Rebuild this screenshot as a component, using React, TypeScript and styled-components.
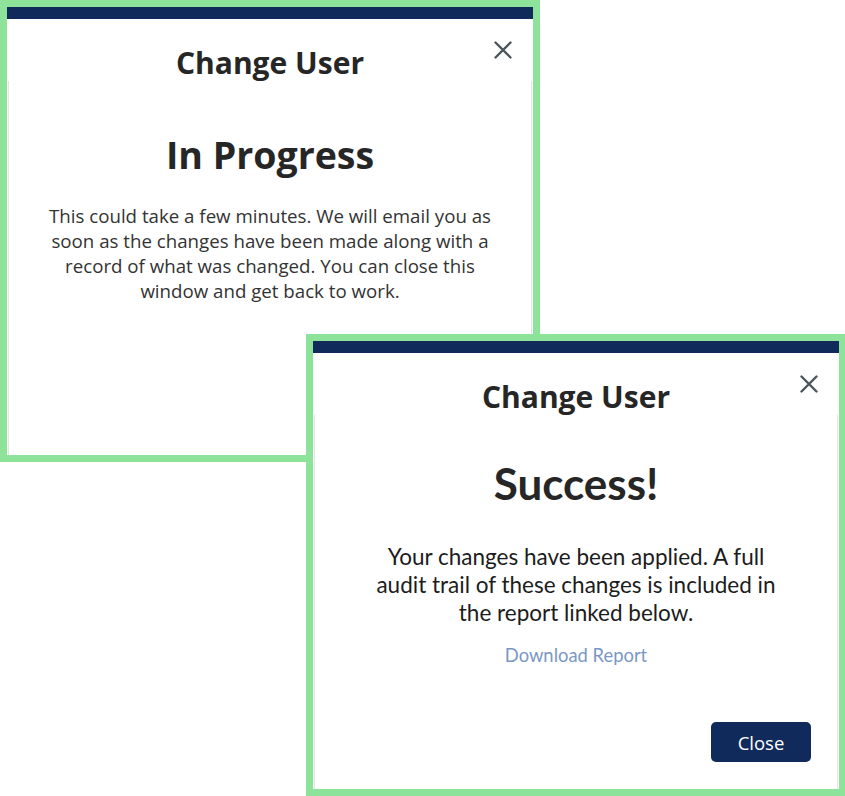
import React from "react";
import styled, { createGlobalStyle } from "styled-components";

const GlobalStyle = createGlobalStyle`
  html, body { margin: 0; padding: 0; background: #ffffff; }
  body { font-family: "Open Sans", "Liberation Sans", sans-serif; }
`;

const Desk = styled.div`
  position: relative;
  width: 845px;
  height: 796px;
  overflow: hidden;
  background: #ffffff;
`;

const Card = styled.section<{ $x: number; $y: number }>`
  position: absolute;
  left: ${(p) => p.$x}px;
  top: ${(p) => p.$y}px;
  width: 540px;
  height: 462px;
  box-sizing: border-box;
  border: 7px solid #8ee39a;
  background: #ffffff;
  display: flex;
  flex-direction: column;
`;

const TopBar = styled.div`
  height: 12px;
  flex: none;
  background: #0f2a5b;
`;

const Header = styled.header`
  height: 62px;
  flex: none;
  display: grid;
  grid-template-columns: 1fr auto 1fr;
`;

const Title = styled.h2`
  grid-column: 2;
  margin: 25px 0 0;
  font-family: "Open Sans", sans-serif;
  font-weight: 700;
  font-size: 30px;
  line-height: 38px;
  color: #262626;
`;

const CloseX = styled.button`
  grid-column: 3;
  justify-self: end;
  align-self: start;
  margin: 21px 20px 0 0;
  width: 20px;
  height: 20px;
  padding: 0;
  border: none;
  background: none;
  cursor: pointer;
  display: flex;
  align-items: center;
  justify-content: center;
`;

const Body = styled.div<{ $top: number }>`
  flex: 1;
  display: flex;
  flex-direction: column;
  align-items: center;
  text-align: center;
  padding: ${(p) => p.$top}px 0 27px;
  margin: 0 1px;
  border-left: 1px solid #e4e4e4;
  border-right: 1px solid #e4e4e4;
`;

const Heading = styled.h1<{ $alt?: boolean }>`
  margin: 0;
  font-family: ${(p) => (p.$alt ? '"Lato", sans-serif' : '"Open Sans", sans-serif')};
  font-weight: 700;
  font-size: ${(p) => (p.$alt ? 44 : 37.5)}px;
  line-height: ${(p) => (p.$alt ? 56 : 52)}px;
  color: #262626;
`;

const Text = styled.p<{ $alt?: boolean }>`
  margin: ${(p) => (p.$alt ? 32 : 22)}px 0 0;
  max-width: ${(p) => (p.$alt ? 410 : 458)}px;
  font-family: ${(p) => (p.$alt ? '"Lato", sans-serif' : '"Open Sans", sans-serif')};
  font-size: ${(p) => (p.$alt ? 22.5 : 18.7)}px;
  line-height: ${(p) => (p.$alt ? 28 : 25)}px;
  color: ${(p) => (p.$alt ? "#1c1c1c" : "#333333")};
`;

const ReportLink = styled.a`
  margin-top: 17px;
  font-family: "Lato", sans-serif;
  font-size: 18.4px;
  line-height: 22px;
  color: #7b98c4;
  text-decoration: none;
`;

const Footer = styled.div`
  margin-top: auto;
  align-self: stretch;
  display: flex;
  justify-content: flex-end;
  padding-right: 26px;
`;

const PrimaryButton = styled.button`
  width: 100px;
  height: 40px;
  border: none;
  border-radius: 5px;
  background: #0f2a5b;
  color: #ffffff;
  font-family: "Open Sans", sans-serif;
  font-size: 18.5px;
  cursor: pointer;
`;

const XIcon = () => (
  <svg width="18" height="18" viewBox="0 0 18 18" fill="none">
    <path d="M1.5 1.5 L16.5 16.5 M16.5 1.5 L1.5 16.5" stroke="#4b565c" strokeWidth="2.4" strokeLinecap="round" />
  </svg>
);

export default function App() {
  return (
    <>
      <GlobalStyle />
      <Desk>
        <Card $x={0} $y={0}>
          <TopBar />
          <Header>
            <Title>Change User</Title>
            <CloseX aria-label="Close"><XIcon /></CloseX>
          </Header>
          <Body $top={48}>
            <Heading>In Progress</Heading>
            <Text>
              This could take a few minutes. We will email you as soon as the changes have been made
              along with a record of what was changed. You can close this window and get back to work.
            </Text>
          </Body>
        </Card>
        <Card $x={306} $y={334}>
          <TopBar />
          <Header>
            <Title>Change User</Title>
            <CloseX aria-label="Close"><XIcon /></CloseX>
          </Header>
          <Body $top={40}>
            <Heading $alt>Success!</Heading>
            <Text $alt>
              Your changes have been applied. A full audit trail of these changes is included in the
              report linked below.
            </Text>
            <ReportLink href="#">Download Report</ReportLink>
            <Footer>
              <PrimaryButton>Close</PrimaryButton>
            </Footer>
          </Body>
        </Card>
      </Desk>
    </>
  );
}
